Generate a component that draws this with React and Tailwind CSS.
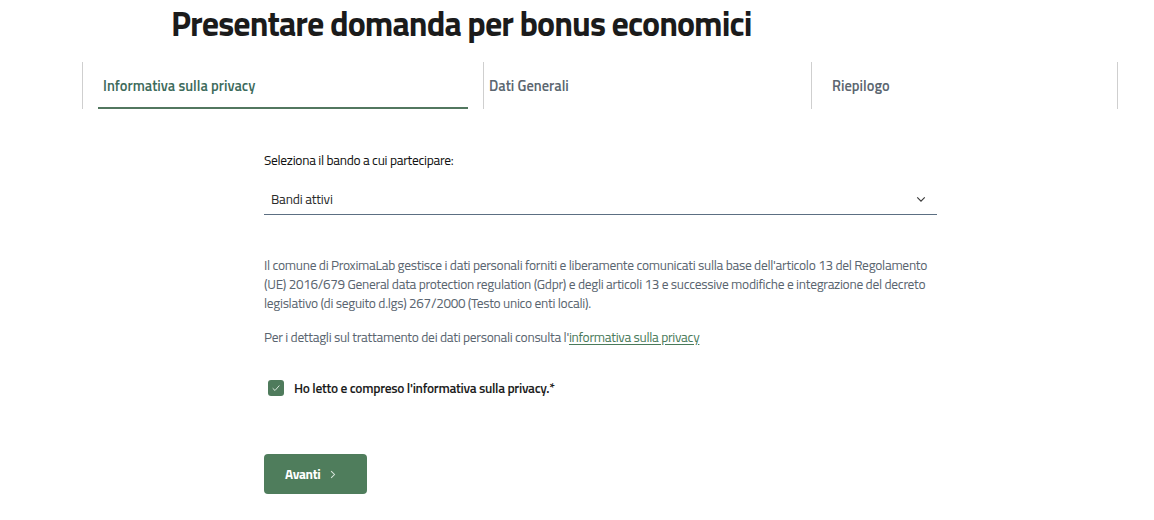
import React, { useState } from 'react';

const font = { fontFamily: "'Titillium Web', 'Liberation Sans Narrow', 'DejaVu Sans Condensed', 'Roboto Condensed', sans-serif" };

function Chevron({ className }) {
  return (
    <svg className={className} viewBox="0 0 12 8" fill="none" stroke="currentColor" strokeWidth="1.4">
      <path d="M1.5 1.5 6 6 10.5 1.5" />
    </svg>
  );
}

export default function App() {
  const [checked, setChecked] = useState(true);
  const tabs = [
    { label: 'Informativa sulla privacy', w: 'w-[401px]', active: true },
    { label: 'Dati Generali', w: 'w-[328px]', pad: 'pl-[5px]' },
    { label: 'Riepilogo', w: 'w-[307px]', pad: 'pl-[20px]' },
  ];

  return (
    <div className="bg-white w-[1154px] min-h-[520px]" style={font}>
      <h1 className="pl-[171px] pt-[2px] pb-[2px] text-[34px] leading-[42px] font-bold text-[#1b1b1b] tracking-[-0.95px]">
        Presentare domanda per bonus economici
      </h1>

      <div className="mt-[16px] ml-[82px] flex h-[47px]">
        {tabs.map((t, i) => (
          <div key={t.label} className={`${t.w} h-full border-l border-[#cfcfcf] ${i === tabs.length - 1 ? 'border-r' : ''}`}>
            {t.active ? (
              <div className="mx-[15px] h-full flex items-center border-b-2 border-[#52775f] pl-[5px] pt-[4px] text-[14.5px] font-semibold text-[#3d6b5b]">
                {t.label}
              </div>
            ) : (
              <div className={`h-full flex items-center ${t.pad} pt-[2px] text-[14.5px] font-semibold text-[#5b6670]`}>
                {t.label}
              </div>
            )}
          </div>
        ))}
      </div>

      <div className="ml-[264px] w-[673px]">
        <label className="block mt-[41px] text-[13.5px] leading-[20px] font-medium tracking-[-0.3px] text-[#111]">
          Seleziona il bando a cui partecipare:
        </label>
        <div className="mt-[9px] flex items-center justify-between border-b border-[#5c6f82] pb-[5px] pl-[7px] pr-[11px] h-[36px]">
          <span className="text-[13.5px] leading-[20px] tracking-[-0.2px] text-[#2a2a2a] pt-[10px]">Bandi attivi</span>
          <Chevron className="w-[10px] h-[7px] mt-[10px] text-[#3a3a3a]" />
        </div>

        <p className="mt-[41px] text-[13.5px] leading-[19px] tracking-[-0.3px] text-[#5a6570]">
          Il comune di ProximaLab gestisce i dati personali forniti e liberamente comunicati sulla base dell'articolo 13 del Regolamento (UE) 2016/679 General data protection regulation (Gdpr) e degli articoli 13 e successive modifiche e integrazione del decreto legislativo (di seguito d.lgs) 267/2000 (Testo unico enti locali).
        </p>
        <p className="mt-[15px] text-[13.5px] leading-[19px] tracking-[-0.3px] text-[#5a6570]">
          Per i dettagli sul trattamento dei dati personali consulta l'
          <a href="#" className="text-[#4a7a5a] underline underline-offset-2">informativa sulla privacy</a>
        </p>

        <label className="mt-[31px] flex items-center h-[20px] cursor-pointer" onClick={() => setChecked(c => !c)}>
          <span className={`ml-[4px] w-[16px] h-[16px] rounded-[3px] flex items-center justify-center ${checked ? 'bg-[#4f7b5c]' : 'border border-[#5c6f82]'}`}>
            {checked && (
              <svg viewBox="0 0 12 12" className="w-[10px] h-[10px]" fill="none" stroke="#dbe8df" strokeWidth="1.2">
                <path d="M2 6.3 4.8 9 10 3" />
              </svg>
            )}
          </span>
          <span className="ml-[10px] text-[13.5px] font-semibold tracking-[-0.3px] text-[#1c1c1c]">Ho letto e compreso l'informativa sulla privacy.*</span>
        </label>

        <button className="mt-[56px] w-[103px] h-[40px] rounded-[4px] bg-[#4f7d5c] flex items-center pl-[21px] text-white text-[13.5px] font-bold tracking-[-0.3px]">
          Avanti
          <svg viewBox="0 0 8 12" className="ml-[9px] w-[6px] h-[9px]" fill="none" stroke="#d8e6dc" strokeWidth="1.4">
            <path d="M1.5 1.5 6 6 1.5 10.5" />
          </svg>
        </button>
      </div>
    </div>
  );
}
